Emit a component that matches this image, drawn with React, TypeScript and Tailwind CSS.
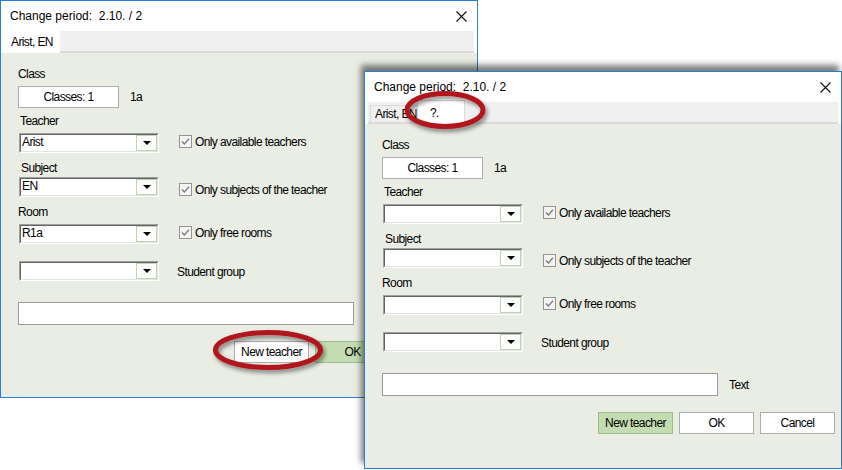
import React from "react";

function Checkbox() {
  return (
    <svg width="13" height="13" viewBox="0 0 13 13" className="shrink-0">
      <rect x="0.5" y="0.5" width="12" height="12" fill="#f4f4f4" stroke="#939393" />
      <polyline points="3,6.5 5.3,9 10,3.8" fill="none" stroke="#7b7b7b" strokeWidth="1.3" />
    </svg>
  );
}

function Combo({ value }: { value: string }) {
  return (
    <div className="w-[140px] h-[20px] shrink-0 flex border-t border-l border-b border-r border-t-[#a0a0a0] border-l-[#a0a0a0] border-b-white border-r-white">
      <div className="flex-1 flex bg-white border-t border-l border-b border-r border-t-[#646464] border-l-[#646464] border-b-[#e3e3e3] border-r-[#e3e3e3]">
        <div className="flex-1 leading-[14px] pl-[1px]">{value}</div>
        <div className="w-[21px] border border-[#bdd6ad] bg-white flex items-center justify-center">
          <svg width="8" height="4" viewBox="0 0 8 4">
            <polygon points="0,0 8,0 4,4" fill="#000" />
          </svg>
        </div>
      </div>
    </div>
  );
}

function CloseX() {
  return (
    <svg width="11" height="11" viewBox="0 0 11 11">
      <path d="M0.5 0.5 L10.5 10.5 M10.5 0.5 L0.5 10.5" stroke="#111" strokeWidth="1.1" />
    </svg>
  );
}

function Btn({ label, green }: { label: string; green?: boolean }) {
  return (
    <div
      className={
        green
          ? "h-[22px] w-[75px] border border-[#9ebd8c] bg-[#c3dcb1] flex items-center justify-center leading-[14px]"
          : "h-[22px] w-[75px] border border-[#adadad] bg-white flex items-center justify-center leading-[14px]"
      }
    >
      {label}
    </div>
  );
}

function Dialog({ second }: { second?: boolean }) {
  const vals = second ? ["", "", "", ""] : ["Arist", "EN", "R1a", ""];
  return (
    <div className="w-[478px] h-[398px] border border-[#2a7dd4] bg-white flex flex-col text-black">
      {/* title bar */}
      <div className="h-[30px] shrink-0 flex items-center pl-[9px] pr-[10px] font-['Liberation_Sans',Arial,sans-serif] text-[12px] tracking-normal">
        <div className="flex-1 whitespace-pre">Change period:  2.10. / 2</div>
        <CloseX />
      </div>
      {/* tab strip */}
      <div className="h-[22px] shrink-0 px-[3px] flex">
        <div className="flex-1 bg-[#f0f0f0] border-b-2 border-[#d9d9d9] flex items-end">
          {second ? (
            <>
              <div className="ml-[2px] w-[47px] h-[17px] border-t border-l border-[#d9d9d9] bg-[#f0f0f0] pl-[4px] flex items-center leading-[14px] whitespace-nowrap">
                Arist, EN
              </div>
              <div className="w-[48px] h-[24px] -mb-[2px] bg-white border-t border-l border-r border-[#dcdcdc] pl-[12px] flex items-center leading-[14px]">
                ?.
              </div>
            </>
          ) : (
            <div className="w-[56px] h-[22px] -mb-[2px] bg-white pl-[7px] flex items-center leading-[14px] whitespace-nowrap">
              Arist, EN
            </div>
          )}
        </div>
      </div>
      {/* content */}
      <div className="flex-1 bg-[#e9ede4] pl-[17px] flex flex-col leading-[14px]">
        <div className="mt-[14px] h-[14px]">Class</div>
        <div className="mt-[5px] flex items-center">
          <div className="w-[101px] h-[22px] border border-[#adadad] bg-white flex items-center justify-center">Classes: 1</div>
          <div className="ml-[11px]">1a</div>
        </div>
        <div className="mt-[6px] h-[14px] ml-[2px]">Teacher</div>
        <div className="mt-[5px] flex items-center ml-[1px]">
          <Combo value={vals[0]} />
          <div className="ml-[20px] mb-[3px] flex items-center gap-[3px]">
            <Checkbox />
            <span>Only available teachers</span>
          </div>
        </div>
        <div className="mt-[8px] h-[14px] ml-[3px]">Subject</div>
        <div className="mt-[2px] flex items-center ml-[1px]">
          <Combo value={vals[1]} />
          <div className="ml-[20px] mt-[5px] flex items-center gap-[3px]">
            <Checkbox />
            <span>Only subjects of the teacher</span>
          </div>
        </div>
        <div className="mt-[8px] h-[14px]">Room</div>
        <div className="mt-[5px] flex items-center ml-[1px]">
          <Combo value={vals[2]} />
          <div className="ml-[20px] mb-[3px] flex items-center gap-[3px]">
            <Checkbox />
            <span>Only free rooms</span>
          </div>
        </div>
        <div className="mt-[17px] flex items-center ml-[1px]">
          <Combo value={vals[3]} />
          <div className="ml-[18px] mt-[2px]">Student group</div>
        </div>
        <div className="mt-[21px] flex items-center">
          <div className="w-[336px] h-[23px] border border-[#9a9a9a] bg-white shrink-0" />
          <div className="ml-[11px]">Text</div>
        </div>
        <div className="mt-[16px] flex justify-end gap-[6px] pr-[6px]">
          <Btn label="New teacher" green={second} />
          <Btn label="OK" green={!second} />
          <Btn label="Cancel" />
        </div>
      </div>
    </div>
  );
}

export default function App() {
  return (
    <div className="relative w-[842px] h-[470px] bg-white overflow-hidden font-['Liberation_Sans',Arial,sans-serif] text-[12px] tracking-[-0.6px]">
      <div className="absolute left-0 top-0">
        <Dialog />
      </div>
      <div className="absolute left-[364px] top-[71px] shadow-[-3px_-6px_6px_rgba(0,0,0,0.5)]">
        <Dialog second />
      </div>
      <svg className="absolute left-0 top-0 pointer-events-none" width="842" height="470" viewBox="0 0 842 470">
        <defs>
          <filter id="sh" x="-20%" y="-30%" width="140%" height="170%">
            <feDropShadow dx="2" dy="3" stdDeviation="2" floodColor="#000" floodOpacity="0.45" />
          </filter>
        </defs>
        <ellipse cx="268" cy="350" rx="52.5" ry="17.5" fill="none" stroke="#b0141b" strokeWidth="5" filter="url(#sh)" />
        <ellipse cx="445" cy="110" rx="38" ry="16.5" fill="none" stroke="#b0141b" strokeWidth="5" filter="url(#sh)" />
      </svg>
    </div>
  );
}
